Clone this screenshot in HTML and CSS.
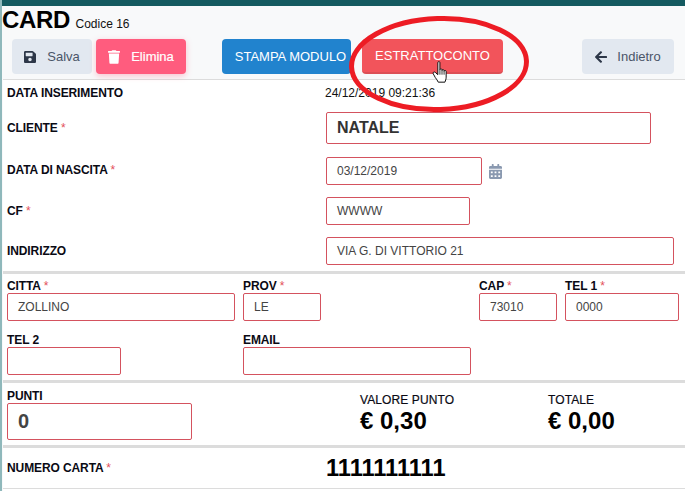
FILE: index.html
```html
<!DOCTYPE html>
<html lang="it">
<head>
<meta charset="utf-8">
<title>Card</title>
<link rel="stylesheet" href="styles.css">
</head>
<body>
<div class="topbar"></div>
<main class="page">
  <h1 class="title">CARD <small>Codice 16</small></h1>
  <div class="toolbar">
    <button class="btn btn-light btn-salva">
      <svg class="ico" viewBox="0 0 448 512"><path fill="currentColor" d="M433.9 129.9l-83.9-83.9A48 48 0 0 0 316.1 32H48C21.5 32 0 53.5 0 80v352c0 26.5 21.5 48 48 48h352c26.5 0 48-21.5 48-48V163.9a48 48 0 0 0-14.1-34zM224 416c-35.3 0-64-28.7-64-64s28.7-64 64-64 64 28.7 64 64-28.7 64-64 64zm96-304.5V212c0 6.6-5.4 12-12 12H76c-6.6 0-12-5.4-12-12V108c0-6.6 5.4-12 12-12h228.5c3.2 0 6.2 1.3 8.5 3.5l3.5 3.5c2.3 2.3 3.5 5.3 3.5 8.500z"/></svg>
      <span>Salva</span>
    </button>
    <button class="btn btn-pink">
      <svg class="ico ico-trash" viewBox="0 0 448 512"><path fill="currentColor" d="M432 32H312l-9.400-18.700A24 24 0 0 0 281.100 0H166.800a23.700 23.700 0 0 0-21.400 13.300L136 32H16A16 16 0 0 0 0 48v32a16 16 0 0 0 16 16h416a16 16 0 0 0 16-16V48a16 16 0 0 0-16-16zM53.200 467a48 48 0 0 0 47.900 45h245.800a48 48 0 0 0 47.900-45L416 128H32z"/></svg>
      <span>Elimina</span>
    </button>
    <button class="btn btn-blue">STAMPA MODULO</button>
    <button class="btn btn-red">ESTRATTOCONTO</button>
    <button class="btn btn-light btn-back">
      <svg class="ico ico-arrow" viewBox="0 0 448 512"><path fill="currentColor" d="M257.500 445.100l-22.200 22.200c-9.400 9.400-24.600 9.400-33.900 0L7 273c-9.400-9.400-9.400-24.600 0-33.900L201.400 44.700c9.400-9.400 24.600-9.400 33.900 0l22.200 22.200c9.500 9.500 9.300 25-.4 34.300L136.600 216H424c13.300 0 24 10.700 24 24v32c0 13.300-10.700 24-24 24H136.600l120.500 114.800c9.800 9.300 10 24.800.4 34.300z"/></svg>
      <span>Indietro</span>
    </button>
  </div>

  <form class="card">
    <section class="block block-main">
      <div class="line line-info"><span class="lbl">DATA INSERIMENTO</span><span class="stamp">24/12/2019 09:21:36</span></div>
      <div class="line line-client"><label class="lbl">CLIENTE <i>*</i></label><div class="field f-client field-big">NATALE</div></div>
      <div class="line line-birth"><label class="lbl">DATA DI NASCITA <i>*</i></label><div class="field f-birth">03/12/2019</div>
        <svg class="cal" viewBox="0 0 448 512"><path fill="currentColor" d="M0 464c0 26.500 21.500 48 48 48h352c26.500 0 48-21.500 48-48V192H0v272zm320-196c0-6.600 5.400-12 12-12h40c6.600 0 12 5.400 12 12v40c0 6.600-5.400 12-12 12h-40c-6.600 0-12-5.400-12-12v-40zm0 128c0-6.600 5.400-12 12-12h40c6.600 0 12 5.400 12 12v40c0 6.600-5.400 12-12 12h-40c-6.600 0-12-5.400-12-12v-40zM192 268c0-6.600 5.400-12 12-12h40c6.600 0 12 5.400 12 12v40c0 6.600-5.400 12-12 12h-40c-6.600 0-12-5.400-12-12v-40zm0 128c0-6.600 5.400-12 12-12h40c6.600 0 12 5.400 12 12v40c0 6.600-5.400 12-12 12h-40c-6.600 0-12-5.400-12-12v-40zM64 268c0-6.600 5.400-12 12-12h40c6.600 0 12 5.400 12 12v40c0 6.600-5.400 12-12 12H76c-6.600 0-12-5.400-12-12v-40zm0 128c0-6.600 5.400-12 12-12h40c6.600 0 12 5.400 12 12v40c0 6.600-5.400 12-12 12H76c-6.600 0-12-5.400-12-12v-40zM400 64h-48V16c0-8.800-7.200-16-16-16h-32c-8.800 0-16 7.200-16 16v48H160V16c0-8.800-7.200-16-16-16h-32c-8.800 0-16 7.200-16 16v48H48C21.500 64 0 85.500 0 112v48h448v-48c0-26.500-21.500-48-48-48z"/></svg>
      </div>
      <div class="line line-cf"><label class="lbl">CF <i>*</i></label><div class="field f-cf">WWWW</div></div>
      <div class="line line-addr"><label class="lbl">INDIRIZZO</label><div class="field f-addr">VIA G. DI VITTORIO 21</div></div>
    </section>

    <section class="block block-place">
      <div class="cols cols-a">
        <div class="col c-citta"><label class="lbl">CITTA <i>*</i></label><div class="field pad">ZOLLINO</div></div>
        <div class="col c-prov"><label class="lbl">PROV <i>*</i></label><div class="field pad">LE</div></div>
        <div class="col c-cap"><label class="lbl">CAP <i>*</i></label><div class="field pad">73010</div></div>
        <div class="col c-tel1"><label class="lbl">TEL 1 <i>*</i></label><div class="field pad">0000</div></div>
      </div>
      <div class="cols cols-b">
        <div class="col c-tel2"><label class="lbl">TEL 2</label><div class="field pad"></div></div>
        <div class="col c-email"><label class="lbl">EMAIL</label><div class="field pad"></div></div>
      </div>
    </section>

    <section class="block block-points">
      <div class="col c-punti"><label class="lbl">PUNTI</label><div class="field field-points">0</div></div>
      <div class="col c-val"><span class="lbl lbl-plain">VALORE PUNTO</span><strong class="amount">€ 0,30</strong></div>
      <div class="col c-tot"><span class="lbl lbl-plain">TOTALE</span><strong class="amount">€ 0,00</strong></div>
    </section>

    <section class="block block-number">
      <label class="lbl">NUMERO CARTA <i>*</i></label><strong class="cardno">1111111111</strong>
    </section>
  </form>
</main>

<svg class="ring" viewBox="0 0 190 112"><ellipse cx="95" cy="56" rx="87.500" ry="45.500" transform="rotate(-2 95 56)" fill="none" stroke="#ed1c24" stroke-width="5"/></svg>
<svg class="hand" viewBox="0 0 24 30"><path fill="#fff" stroke="#111" stroke-width="1.200" stroke-linejoin="round" d="M7 2.500c0-1.500 2.500-1.500 2.500 0V11c0-1.300 2.500-1.300 2.500 0v1c0-1.300 2.500-1.300 2.500 0v1c0-1.300 2.500-1.300 2.500 0v7c0 3-1 4-1.500 6h-8c-.8-2-2-3.500-3.500-5.500L1.500 16c-1-1.500 1-3 2.500-1.700L7 17z"/><path fill="none" stroke="#111" d="M9.500 11v6M12 12v5M14.500 13v4"/></svg>
</body>
</html>
```
FILE: styles.css
```css
* { box-sizing: border-box; }
html, body { margin: 0; padding: 0; }
body {
  position: relative;
  width: 685px;
  height: 491px;
  overflow: hidden;
  background: #f8f9fa;
  font-family: "Liberation Sans", Arial, sans-serif;
  color: #000;
  border-left: 2px solid #8fb8bb;
}
.topbar { height: 6px; margin-left: -2px; background: #145a60; }
.page { padding-left: 1px; }
.title {
  margin: 0 0 0 -1px;
  height: 33px;
  font-size: 24px;
  line-height: 28px;
  font-weight: 700;
  letter-spacing: -.3px;
}
.title small { font-size: 12px; font-weight: 400; color: #111; margin-left: -1px; letter-spacing: 0; }
.toolbar { display: flex; height: 35px; padding-left: 9px; }
.btn {
  display: flex;
  align-items: center;
  justify-content: center;
  height: 35px;
  padding: 0;
  border: 0;
  border-radius: 4px;
  font-family: inherit;
  font-size: 13px;
  color: #fff;
}
.btn-light { background: #e2e8f0; color: #4a5568; font-size: 13px; }
.btn-salva { width: 80px; gap: 11px; }
.btn-pink { width: 90px; margin-left: 4px; gap: 11px; background: #ff5c7e; box-shadow: 0 2px 6px rgba(255, 92, 126, .35); -webkit-text-stroke: .2px #fff; }
.btn-blue { width: 129px; margin-left: 36px; background: #2183ce; padding: 0 0 1px 8px; }
.btn-red { width: 141px; margin-left: 11px; background: #f2545b; border-bottom: 2px solid #dc4f55; }
.btn-back { width: 92px; margin-left: 79px; gap: 10px; }
.ico { width: 12px; height: 14px; color: #2d3748; }
.ico-trash { color: #fff; width: 12px; height: 14px; }
.ico-arrow { color: #2d3748; }

.card { margin-top: 5px; background: #fff; border-top: 1px solid #dcdcdc; height: 412px; }
.block { padding-left: 4px; border-bottom: 3px solid #dcdcdc; }
.lbl {
  font-size: 12px;
  line-height: 14px;
  font-weight: 700;
  color: #0a0a14;
  letter-spacing: -.1px;
}
.lbl i { font-style: normal; font-weight: 400; color: #e3505a; }
.lbl-plain { font-weight: 400; -webkit-text-stroke: .2px #0a0a14; display: block; letter-spacing: .1px; }
.line { display: flex; align-items: center; }
.line .lbl { flex: 0 0 319px; }
.line-birth .lbl { margin-top: -2px; }
.stamp { font-size: 12px; color: #111; margin-left: -1px; }
.field {
  height: 28px;
  border: 1px solid #d4525e;
  border-radius: 2px;
  background: #fff;
  font-size: 12px;
  line-height: 26px;
  color: #444;
  padding-left: 10px;
}
.line-info { height: 26px; padding-bottom: 1px; }
.line-client { height: 38px; margin-top: 3px; }
.field-big { height: 32px; font-size: 16px; font-weight: 700; line-height: 30px; color: #333; }
.f-client { width: 325px; }
.line-birth { height: 28px; margin-top: 10px; }
.f-birth { width: 156px; }
.cal { width: 13px; height: 15px; margin-left: 7px; color: #8a99b0; }
.line-cf { height: 28px; margin-top: 12px; }
.f-cf { width: 144px; }
.line-addr { height: 28px; margin-top: 12px; }
.f-addr { width: 348px; }
.block-main { height: 194px; }

.block-place { height: 109px; padding-top: 5px; }
.cols { display: flex; }
.col { display: flex; flex-direction: column; }
.col .lbl { height: 14px; }
.cols-b { margin-top: 12px; }
.c-citta { width: 228px; }
.c-prov { width: 78px; margin-left: 8px; }
.c-cap { width: 78px; margin-left: 158px; }
.c-tel1 { width: 114px; margin-left: 8px; }
.c-tel2 { width: 114px; }
.c-email { width: 228px; margin-left: 122px; }

.block-points { display: flex; height: 65px; padding-top: 6px; }
.c-punti { width: 185px; }
.field-points { height: 37px; font-size: 20px; font-weight: 700; line-height: 35px; color: #444; }
.c-val { margin-left: 168px; width: 188px; padding-top: 4px; }
.c-tot { padding-top: 4px; }
.amount { font-size: 24px; line-height: 27px; display: block; color: #000; }
.block-number { display: flex; align-items: center; height: 41px; border-bottom-width: 1px; }
.block-number .lbl { flex: 0 0 319px; }
.cardno { font-size: 23.600px; color: #000; }

.ring { position: absolute; left: 342px; top: 8px; width: 190px; height: 112px; }
.hand { position: absolute; left: 430px; top: 60px; width: 20px; height: 26px; }
```
